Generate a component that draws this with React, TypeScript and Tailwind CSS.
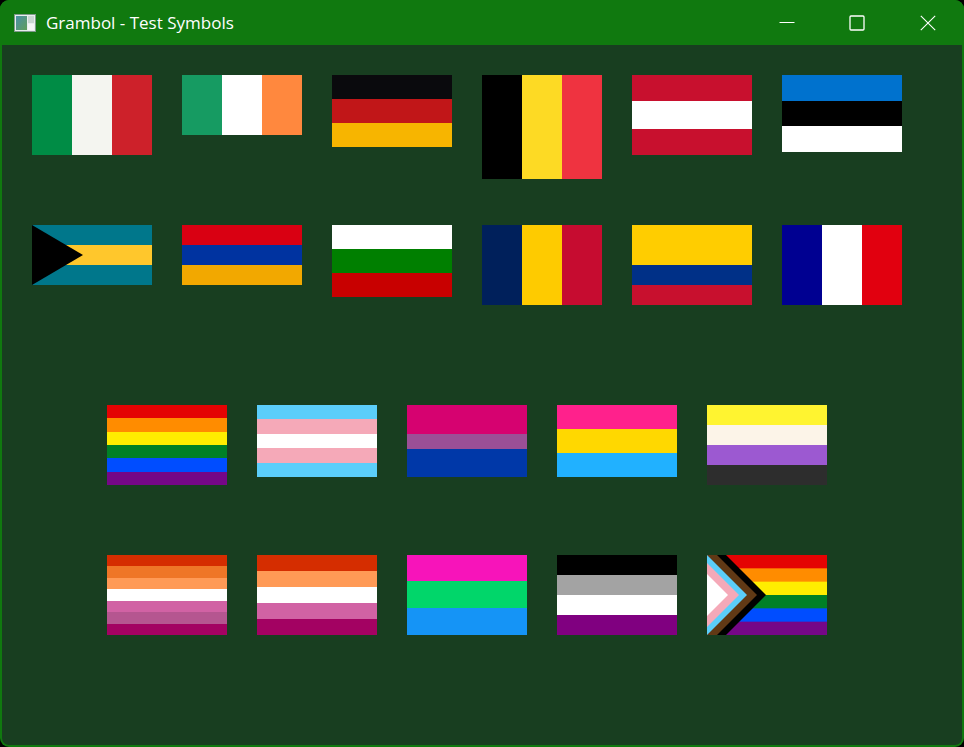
import React from 'react';

type Flag = {
  name: string;
  height: string;
  dir?: 'row' | 'col';
  stripes: string[];
};

const row1: Flag[] = [
  { name: 'Italy', height: 'h-[80px]', dir: 'row', stripes: ['bg-[#008c45]', 'bg-[#f4f5f0]', 'bg-[#cd212a]'] },
  { name: 'Ireland', height: 'h-[60px]', dir: 'row', stripes: ['bg-[#169b62]', 'bg-white', 'bg-[#ff883e]'] },
  { name: 'Germany', height: 'h-[72px]', stripes: ['bg-[#0a0a0d]', 'bg-[#c11618]', 'bg-[#f7b500]'] },
  { name: 'Belgium', height: 'h-[104px]', dir: 'row', stripes: ['bg-black', 'bg-[#fdda24]', 'bg-[#ef3340]'] },
  { name: 'Austria', height: 'h-[80px]', stripes: ['bg-[#c8102e] flex-[26]', 'bg-white flex-[28]', 'bg-[#c8102e] flex-[26]'] },
  { name: 'Estonia', height: 'h-[77px]', stripes: ['bg-[#0072ce]', 'bg-black', 'bg-white'] },
];

const row2: Flag[] = [
  { name: 'Armenia', height: 'h-[60px]', stripes: ['bg-[#d90012]', 'bg-[#0033a0]', 'bg-[#f2a800]'] },
  { name: 'Bulgaria', height: 'h-[72px]', stripes: ['bg-white', 'bg-[#007f00]', 'bg-[#c80000]'] },
  { name: 'Chad', height: 'h-[80px]', dir: 'row', stripes: ['bg-[#00205b]', 'bg-[#fecb00]', 'bg-[#c60c30]'] },
  { name: 'Colombia', height: 'h-[80px]', stripes: ['bg-[#ffcd00] flex-[2]', 'bg-[#003087]', 'bg-[#c8102e]'] },
  { name: 'France', height: 'h-[80px]', dir: 'row', stripes: ['bg-[#000091]', 'bg-white', 'bg-[#e1000f]'] },
];

const row3: Flag[] = [
  { name: 'Rainbow', height: 'h-[80px]', stripes: ['bg-[#e40303]', 'bg-[#ff8c00]', 'bg-[#ffed00]', 'bg-[#008026]', 'bg-[#004dff]', 'bg-[#750787]'] },
  { name: 'Transgender', height: 'h-[72px]', stripes: ['bg-[#5bcefa]', 'bg-[#f5a9b8]', 'bg-white', 'bg-[#f5a9b8]', 'bg-[#5bcefa]'] },
  { name: 'Bisexual', height: 'h-[72px]', stripes: ['bg-[#d60270] flex-[29]', 'bg-[#9b4f96] flex-[15]', 'bg-[#0038a8] flex-[28]'] },
  { name: 'Pansexual', height: 'h-[72px]', stripes: ['bg-[#ff218c]', 'bg-[#ffd800]', 'bg-[#21b1ff]'] },
  { name: 'Non-binary', height: 'h-[80px]', stripes: ['bg-[#fff430]', 'bg-[#fcf4e8]', 'bg-[#9c59d1]', 'bg-[#2d2d2d]'] },
];

const row4: Flag[] = [
  { name: 'Lesbian', height: 'h-[80px]', stripes: ['bg-[#d52d00]', 'bg-[#ef7627]', 'bg-[#ff9a56]', 'bg-white', 'bg-[#d162a4]', 'bg-[#b55690]', 'bg-[#a30262]'] },
  { name: 'Lesbian 5', height: 'h-[80px]', stripes: ['bg-[#d52d00]', 'bg-[#ff9a56]', 'bg-white', 'bg-[#d162a4]', 'bg-[#a30262]'] },
  { name: 'Polysexual', height: 'h-[80px]', stripes: ['bg-[#f714ba] flex-[26]', 'bg-[#01d66a] flex-[27]', 'bg-[#1594f6] flex-[27]'] },
  { name: 'Asexual', height: 'h-[80px]', stripes: ['bg-black', 'bg-[#a3a3a3]', 'bg-white', 'bg-[#800080]'] },
];

const StripedFlag = ({ flag }: { flag: Flag }) => (
  <div className={`flex w-[120px] shrink-0 ${flag.height} ${flag.dir === 'row' ? 'flex-row' : 'flex-col'}`}>
    {flag.stripes.map((s, i) => (
      <div key={i} className={s.includes('flex-[') ? s : `flex-1 ${s}`} />
    ))}
  </div>
);

const Bahamas = () => (
  <svg width="120" height="60" viewBox="0 0 120 60" className="shrink-0">
    <rect width="120" height="60" fill="#00778b" />
    <rect y="20" width="120" height="20" fill="#ffc72c" />
    <polygon points="0,0 51,30 0,60" fill="#000" />
  </svg>
);

const ProgressFlag = () => (
  <svg width="120" height="80" viewBox="0 0 120 80" className="shrink-0">
    <rect width="120" height="14" fill="#e40303" />
    <rect y="13.33" width="120" height="14" fill="#ff8c00" />
    <rect y="26.67" width="120" height="14" fill="#ffed00" />
    <rect y="40" width="120" height="14" fill="#008026" />
    <rect y="53.33" width="120" height="14" fill="#004dff" />
    <rect y="66.67" width="120" height="13.33" fill="#750787" />
    <polygon points="0,0 19,0 59,40 19,80 0,80" fill="#000" />
    <polygon points="0,0 10,0 50,40 10,80 0,80" fill="#613915" />
    <polygon points="0,0 40,40 0,80" fill="#5bcefa" />
    <polygon points="0,8 32,40 0,72" fill="#f5a9b8" />
    <polygon points="0,19 21,40 0,61" fill="#fff" />
  </svg>
);

const AppIcon = () => (
  <svg width="22" height="18" viewBox="0 0 22 18" className="shrink-0">
    <defs>
      <linearGradient id="pane" x1="0" y1="0" x2="1" y2="1">
        <stop offset="0" stopColor="#4a8fa8" />
        <stop offset="1" stopColor="#5f9e5a" />
      </linearGradient>
    </defs>
    <rect x="0.5" y="0.5" width="21" height="17" fill="#e8eeee" stroke="#7f9a8c" />
    <rect x="2" y="2" width="11" height="14" fill="url(#pane)" />
    <rect x="14" y="2" width="6" height="7" fill="#c9d6d2" />
    <rect x="14" y="10" width="6" height="6" fill="#f4f6f6" />
  </svg>
);

const TitleBar = () => (
  <div className="flex h-[45px] shrink-0 items-center bg-[#10790f] pl-[14px] text-white">
    <AppIcon />
    <span className="ml-[10px] font-['Open_Sans',sans-serif] text-[17px] leading-none">Grambol - Test Symbols</span>
    <div className="ml-auto flex h-full">
      <button className="flex h-full w-[70px] items-center justify-center">
        <svg width="16" height="16" viewBox="0 0 16 16">
          <path d="M0.5 7.5H15.5" stroke="#fff" strokeWidth="1" />
        </svg>
      </button>
      <button className="flex h-full w-[70px] items-center justify-center">
        <svg width="16" height="16" viewBox="0 0 16 16">
          <rect x="1" y="1" width="14" height="14" rx="1" fill="none" stroke="#fff" strokeWidth="1.3" />
        </svg>
      </button>
      <button className="flex h-full w-[72px] items-center justify-center">
        <svg width="16" height="16" viewBox="0 0 16 16">
          <path d="M0.8 0.8L15.2 15.2M15.2 0.8L0.8 15.2" stroke="#fff" strokeWidth="1.1" />
        </svg>
      </button>
    </div>
  </div>
);

const App = () => {
  return (
    <div className="h-[747px] w-[964px] overflow-hidden bg-black">
      <div className="flex h-full flex-col overflow-hidden rounded-[9px] bg-[#10790f]">
        <TitleBar />
        <div className="mx-[2px] mb-[2px] flex flex-1 flex-col rounded-b-[7px] bg-[#183e20] pt-[30px]">
          <div className="flex flex-col gap-[70px] pl-[30px]">
            <div className="flex h-[80px] items-start gap-[30px]">
              {row1.map((f) => <StripedFlag key={f.name} flag={f} />)}
            </div>
            <div className="flex items-start gap-[30px]">
              <Bahamas />
              {row2.map((f) => <StripedFlag key={f.name} flag={f} />)}
            </div>
          </div>
          <div className="mt-[100px] flex flex-col gap-[70px] pl-[105px]">
            <div className="flex h-[80px] items-start gap-[30px]">
              {row3.map((f) => <StripedFlag key={f.name} flag={f} />)}
            </div>
            <div className="flex items-start gap-[30px]">
              {row4.map((f) => <StripedFlag key={f.name} flag={f} />)}
              <ProgressFlag />
            </div>
          </div>
        </div>
      </div>
    </div>
  );
};

export default App;
